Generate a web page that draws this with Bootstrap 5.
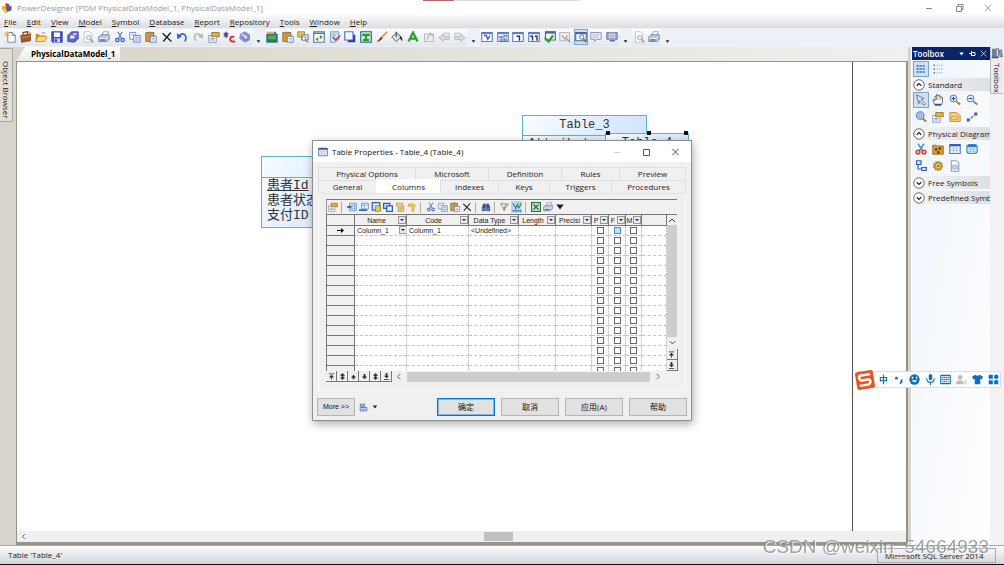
<!DOCTYPE html>
<html lang="en">
<head>
<meta charset="utf-8">
<meta name="viewport" content="width=device-width, initial-scale=1">
<title>PowerDesigner</title>
<link href="https://cdn.jsdelivr.net/npm/bootstrap@5.3.0/dist/css/bootstrap.min.css" rel="stylesheet">
<style>
body{font:8px/12px "Open Sans","Noto Sans CJK SC",sans-serif;color:#222;background:#d8d4cc}
button{font:inherit;color:inherit;border:0;background:none;padding:0}
a{color:inherit;text-decoration:none}
svg{display:block}
.ic{width:12px;height:12px}
.app-title{height:15px;background:#fff;color:#999;padding:0 12px 0 1px}
.win-btns{gap:20px;color:#888}
.app-menu{height:13px;background:linear-gradient(#fbfbfc,#dcdde0);gap:10px}
.app-menu a::first-letter{text-decoration:underline}
.tools{height:19px;background:#ecf0f7;padding-left:3px}
.tgroup{background:linear-gradient(#fbfcfe,#e3e7ee);height:17px}
.tgroup button{width:14px;height:16px;display:grid;place-items:center}
.tgroup .on,.tb-on{background:#cfe0f5;outline:1px solid #7da2ce;outline-offset:-1px}
.g16{width:249px}.g13{width:202px}.g9{width:139px}.g2{width:29px}
.grip{width:13px;height:17px;padding:10px 0 0 4px}
.sidebar{width:16px}
.vtab{writing-mode:vertical-rl;background:#e2dfd8;border:1px solid #aaa69e;border-left:0;white-space:nowrap}
.sidebar .vtab{width:13px;height:74px;padding-top:12px;margin-top:1px}
.doc-tabs{height:14px;background:linear-gradient(90deg,#d8d4cc,#f1f0ee)}
.doc-tab{background:linear-gradient(#fff,#eceae6);clip-path:polygon(9px 0,100% 0,100% 100%,0 100%);padding:0 5px 0 15px;line-height:10px;color:#000;font-weight:700}
.canvas-box{border:solid #96938c;border-width:1px 2px 3px 1px;background:#fff;overflow:hidden}
.sheet{border-right:1px solid #555;margin-right:53px}
.hscroll{height:11px;background:#f0f0f0}
.hthumb{width:29px;height:9px;background:#c1c1c1;margin-left:457px}
.entity{border:1px solid #59b4c4;background:linear-gradient(120deg,#f8fcff,#c8e0fb);font-family:"Liberation Mono","Noto Sans CJK SC",monospace;color:#333;white-space:nowrap}
.entity h2{font-size:12px;line-height:18px;height:20px;margin:0;border-bottom:1px solid #59b4c4;font-weight:400;text-align:center}
.entity p{font-size:13px;line-height:15px;margin:0;padding-left:5px}
.pk{text-decoration:underline}
.e-left{left:244px;top:94px;width:110px;height:72px}
.e-left h2{height:21px}
.e-three{left:505px;top:53px;width:125px;height:60px}
.e-four{left:588px;top:71px;width:84px;height:60px}
.dot{width:4px;height:4px;background:#111;top:-3px}
.dlg{left:295px;top:78px;width:380px;background:#f0f0f0;border:1px solid #8e8e8e;box-shadow:1px 3px 9px #0005}
.dlg-title{height:21px;background:#fff;padding:0 11px 0 5px;color:#111}
.dlg-body{padding:5px 5px 4px 5px}
.trow{height:13px}
.trow button{border:1px solid #dedede;border-bottom:0;border-right:0;line-height:12px}
.trow button:last-child{border-right:1px solid #dedede}
.trow .sel{background:#fff;border-color:#fff;margin-top:-1px;line-height:12px}
.w50{width:51px}.w58{width:58px}.w62{width:62px}.w64{width:64px}.w74{width:73px}.w97{width:97px}
.pane{border:1px solid #fafafa;border-top-color:#e2e2e2;padding:5px 8px 8px 7px}
.gtools{border-top:1px solid #777;height:15px;gap:1px;border-left:1px solid #999}
.gtools button{width:11px;height:12px;display:grid;place-items:center}
.gtools .ic{width:10px;height:10px}
.gtools .tb-on{outline:0;background:#b5d9f5}
.gsep{width:1px;height:11px;background:#aaa;margin:0 3px 0 2px}
.gridwrap{border:1px solid #777;border-right:0;border-bottom:0;height:157px}
.gridview{height:156px;overflow:hidden;background:#fff}
.gbl{table-layout:fixed;width:100%;font:7px/9px "Liberation Sans",sans-serif;border-collapse:separate;border-spacing:0;color:#222}
.gbl th{height:11px;padding:0;background:#f0f0f0;border-right:1px solid #777;border-bottom:1px solid #777;font-weight:400;overflow:hidden;white-space:nowrap}
.gbl td{height:10px;padding:0 0 0 2px;border-right:1px dashed #ccc;border-bottom:1px dashed #c4c4c4;overflow:hidden;white-space:nowrap}
.gbl td.tick{padding:0}
.gbl tbody th{height:10px}
.dd{width:8px;height:8px;border:1px solid #999;background:#e8e8ee;display:grid;place-items:center;flex:none}
.dd::after{content:"";border:2px solid transparent;border-top-color:#224;border-bottom:0}
.gbl input[type=checkbox]{appearance:none;display:block;width:7px;height:7px;margin:1px auto;border:1px solid #666;background:#fff}
.gbl input.hot{background:#bfe0fa;border-color:#4a90c8}
.cellin{width:42px;height:9px;border:0;padding:0;font:inherit;color:inherit;background:none}
.vs{width:10px;background:#f0f0f0}
.vs-thumb{background:#cdcdcd}
.navb button{width:11px;height:11px;border:solid #777;border-width:0 1px 1px 0;display:grid;place-items:center}
.navb svg{width:7px;height:7px;opacity:.8}
.dlg-foot{padding-top:7px;margin:0 -1px}
.foot-btns{gap:6px}
.dbtn{height:18px;background:#e1e1e1;border:1px solid #b4b4b4;line-height:14px;color:#111;width:58px}
.dbtn.main{border:1px solid #0078d7;outline:1px solid #7fb6e6;outline-offset:-2px}
.dbtn.more{width:38px;font-size:7px;font-family:"Liberation Sans",sans-serif}
.toolbox{width:79px;background:linear-gradient(100deg,#eef4fc,#fff);border-left:1px solid #fff;margin-left:3px}
.tbx-head{height:13px;background:#0a246a;color:#fff;padding:0 3px 0 1px;font-weight:600}
.tbx-view{height:18px}
.tbx-sec{height:13px;background:linear-gradient(90deg,#f4f5f7,#dcdfe4);white-space:nowrap;overflow:hidden;gap:3px;padding-left:1px;width:100%;text-align:left}
.tbx-sec .ic{flex:none}
.tbx-grid{display:grid;grid-template-columns:repeat(4,17px);grid-auto-rows:17px;padding:1px}
.tbx-grid button{display:grid;place-items:center;width:16px;height:16px}
.tbx-gap{margin-bottom:2px}
.rail{width:14px;background:#f2f2f4}
.rail .vtab{width:13px;height:47px;border:1px solid #bbb;border-top:0;border-right:0;background:#ececee}
.status{height:20px;background:linear-gradient(#fbfcfd,#d3d5d8);border-top:1px solid #aaa;border-bottom:1px solid #111;padding-left:8px}
.status .srv{width:119px;height:15px;border:1px solid #aaa;padding-left:7px;margin-right:8px;line-height:13px}
.ime{right:3px;top:371px;height:17px;width:144px;background:#fffe;border:1px solid #d5e0ea;border-radius:2px;color:#0b6fc0;padding:0 1px 0 21px;font-size:9px;font-weight:700}
.ime-logo{left:-4px;top:-3px;width:22px;height:22px}
.ime .ic{width:11px;height:11px}
.mark-id{right:15px;bottom:6px;font:19px/24px "Liberation Sans",sans-serif;color:#8a8a8acc;text-shadow:1px 1px 0 #fffc;pointer-events:none}
.strip{left:423px;top:0;width:157px;height:1px;background:linear-gradient(90deg,#b66 31px,#ddd 31px)}
</style>
</head>
<body class="vh-100 overflow-hidden d-flex flex-column">

<!-- icon sheet, drawn on a 16 unit grid -->
<svg width="0" height="0" class="position-absolute" aria-hidden="true">
<defs>
<symbol id="logo" viewBox="0 0 16 16"><path d="M6 1l5 2v5l-5-2z" fill="#d43a2a"/><path d="M1 6l5-2v6l-5 1z" fill="#e8b92c"/><path d="M6 7l8-2v6l-7 3z" fill="#3a63b8"/><path d="M3 11l4-1 2 4-4 1z" fill="#f0c83c"/></symbol>
<symbol id="new" viewBox="0 0 16 16"><path d="M5 2h6l4 4v9H5z" fill="#fff" stroke="#4a6a98"/><path d="M11 2v4h4" fill="none" stroke="#4a6a98"/><path d="M4 0v8M0 4h8M1 1l6 6M7 1L1 7" stroke="#e8a820"/></symbol>
<symbol id="case" viewBox="0 0 16 16"><path d="M1 6l13-2v9l-12 2z" fill="#a05a28" stroke="#6d3a15"/><path d="M4 5V2l6-1v3" fill="none" stroke="#6d3a15" stroke-width="1.5"/><path d="M2 9l12-2" stroke="#e0a060"/><path d="M11 1l4 3" stroke="#e4a93a" stroke-width="2"/></symbol>
<symbol id="open" viewBox="0 0 16 16"><path d="M1 13V4h4l1 2h7v7z" fill="#c98f1d"/><path d="M1 14l3-7h12l-3 7z" fill="#ffdc78" stroke="#b57e19"/><path d="M9 3q3-3 5 1" fill="none" stroke="#4a70b0"/></symbol>
<symbol id="save" viewBox="0 0 16 16"><path d="M1 1h14v14H2l-1-1z" fill="#4356c0" stroke="#27358c"/><path d="M4 2h8v6H4z" fill="#fff"/><path d="M4 10h8v5H4z" fill="#cfd4ec"/><path d="M5 11h3v3H5z" fill="#27358c"/></symbol>
<symbol id="saveall" viewBox="0 0 16 16"><path d="M6 1h9v9l-5 5-9-1V6z" fill="#6067c4" stroke="#383f96"/><path d="M4 6h6v4H4zM8 3h5v2H8z" fill="#dfe2f7"/></symbol>
<symbol id="preview" viewBox="0 0 16 16"><path d="M3 1h7l3 3v11H3z" fill="#fff" stroke="#b0b4ba"/><circle cx="9" cy="9" r="3" fill="#eee" stroke="#999"/><path d="M11 11l4 4" stroke="#999" stroke-width="2"/></symbol>
<symbol id="print" viewBox="0 0 16 16"><path d="M5 6l2-5h7l-2 5z" fill="#fff" stroke="#7b8ba5"/><path d="M1 8l3-3h11v6l-3 3H1z" fill="#b9c7dc" stroke="#5f7391"/><path d="M2 10h9l3-3" fill="none" stroke="#fff"/><path d="M3 12h7" stroke="#4b78bd" stroke-width="2"/></symbol>
<symbol id="cut" viewBox="0 0 16 16"><path d="M5 1l5 9M11 1L6 10" stroke="#5a7da8" stroke-width="1.5"/><circle cx="4.500" cy="12" r="2.300" fill="none" stroke="#2b58b5" stroke-width="1.600"/><circle cx="11.500" cy="12" r="2.300" fill="none" stroke="#2b58b5" stroke-width="1.600"/></symbol>
<symbol id="copy" viewBox="0 0 16 16"><path d="M1 2h8v9H1z" fill="#fff" stroke="#4a78c0"/><path d="M6 6h9v9H6z" fill="#dce9fb" stroke="#4a78c0"/><path d="M3 5h4M8 9h5M8 12h5" stroke="#6f97d3"/></symbol>
<symbol id="paste" viewBox="0 0 16 16"><path d="M1 2h11v12H1z" fill="#d99a2b" stroke="#83601f"/><path d="M4 1h5v3H4z" fill="#888"/><path d="M7 7h8v8H7z" fill="#fff" stroke="#41639c"/><path d="M9 10h4M9 12h4" stroke="#7b94bd"/></symbol>
<symbol id="del" viewBox="0 0 16 16"><path d="M2 3l12 11M13 2L3 14" stroke="#222" stroke-width="1.800"/></symbol>
<symbol id="undo" viewBox="0 0 16 16"><path d="M4 7c4-6 12-3 8 7" fill="none" stroke="#3263cc" stroke-width="2.200"/><path d="M1 3l1 8 6-4z" fill="#3263cc"/></symbol>
<symbol id="redo" viewBox="0 0 16 16"><path d="M12 7C8 1 0 4 5 13" fill="none" stroke="#b6b9be" stroke-width="2.200"/><path d="M15 3l-1 8-6-4z" fill="#b6b9be"/></symbol>
<symbol id="prop" viewBox="0 0 16 16"><path d="M1 6h10v9H1z" fill="#fff" stroke="#6780a8"/><path d="M3 10h6M3 12h6" stroke="#6780a8"/><path d="M5 2h10v6l-4-1-6 1z" fill="#e3b23c" stroke="#8a6a20"/></symbol>
<symbol id="starc" viewBox="0 0 16 16"><path d="M4 1v8M1 3l6 4M7 3L1 7" stroke="#4338c0" stroke-width="2"/><path d="M15 8c-6-3-8 7-1 6h2" fill="none" stroke="#d52a36" stroke-width="2.400"/></symbol>
<symbol id="swirl" viewBox="0 0 16 16"><path d="M8 1l6 4v7l-6 3-7-5 1-6z" fill="#8590dc" stroke="#7b84cc"/><circle cx="9" cy="8" r="3" fill="#d8dcf8" stroke="#5963b4"/><path d="M4 4l3 3" stroke="#fff" stroke-width="1.500"/></symbol>
<symbol id="model" viewBox="0 0 16 16"><path d="M1 4h14v11H1z" fill="#2c7f62" stroke="#235c8d"/><path d="M1 2h9" stroke="#e0aa33" stroke-width="2"/><path d="M3 6h10v5H3z" fill="#53b04b"/><path d="M12 1v5" stroke="#3d78c4" stroke-width="3"/></symbol>
<symbol id="find" viewBox="0 0 16 16"><path d="M1 1h9v7H1z" fill="#f0c454" stroke="#9b7625"/><path d="M6 5h9v7H6z" fill="#cfe0f6" stroke="#4c6da5"/><circle cx="9" cy="10" r="2.500" fill="#fff" stroke="#666"/><path d="M11 12l4 3" stroke="#b5762c" stroke-width="2"/></symbol>
<symbol id="refresh" viewBox="0 0 16 16"><path d="M1 1h14v14H1z" fill="#fff" stroke="#5575a4" stroke-width="1.500"/><path d="M1 3h14" stroke="#5575a4" stroke-width="2"/><path d="M9 5l4 3-4 3zM7 8l-4 3 4 3z" fill="#4aa52f"/></symbol>
<symbol id="check" viewBox="0 0 16 16"><path d="M2 1h11v10l-5 4H2z" fill="#cfe6f6" stroke="#4f8fc0"/><path d="M4 4h6M4 6h5" stroke="#8aa7d2"/><path d="M5 8l4 4 6-6" stroke="#c93943" stroke-width="2.200" fill="none"/></symbol>
<symbol id="shadow" viewBox="0 0 16 16"><path d="M5 5h10v10H5z" fill="#28398a"/><path d="M1 1h11v11H1z" fill="#f4f9ff" stroke="#4773c1" stroke-width="1.500"/></symbol>
<symbol id="textbox" viewBox="0 0 16 16"><path d="M1 1h14v14H1z" fill="#cdf3c9" stroke="#2b5b9e" stroke-width="1.500"/><path d="M3 5h10M4 12h8M8 4v8" stroke="#1f9e30" stroke-width="3"/></symbol>
<symbol id="brush" viewBox="0 0 16 16"><path d="M15 1L6 10" stroke="#e0a04a" stroke-width="2.500"/><path d="M7 8l2 2-5 4H1z" fill="#654321"/></symbol>
<symbol id="bucket" viewBox="0 0 16 16"><path d="M1 8l7-6 5 6-6 6z" fill="#ddd" stroke="#444"/><path d="M7 1v7" stroke="#444" stroke-width="1.500"/><path d="M12 6q4 2 3 8l-3-4z" fill="#333"/></symbol>
<symbol id="fontc" viewBox="0 0 16 16"><path d="M2 14L8 2l6 12M4 10h8" stroke="#27a32f" stroke-width="3" fill="none"/></symbol>
<symbol id="gbox" viewBox="0 0 16 16"><path d="M2 4h12v10H2z" fill="#eee" stroke="#bbb" stroke-width="1.500"/><path d="M5 11l5-8 3 4" stroke="#aaa" fill="none" stroke-width="1.500"/></symbol>
<symbol id="gleft" viewBox="0 0 16 16"><path d="M1 9l6-5v3h8v4H7v3z" fill="#ddd" stroke="#aaa"/><path d="M7 3h8v3" stroke="#aaa" fill="none"/></symbol>
<symbol id="gright" viewBox="0 0 16 16"><path d="M15 9L9 4v3H1v4h8v3z" fill="#ddd" stroke="#aaa"/><path d="M9 3H1v3" stroke="#aaa" fill="none"/></symbol>
<symbol id="dg1" viewBox="0 0 16 16"><path d="M1 2h14v12H1z" fill="#fff" stroke="#5a80c0" stroke-width="1.500"/><path d="M1 3h14" stroke="#5a80c0" stroke-width="2.500"/><path d="M4 6h3l2 5 3-5" stroke="#3658b8" fill="none" stroke-width="1.800"/></symbol>
<symbol id="dg2" viewBox="0 0 16 16"><path d="M1 2h14v12H1z" fill="#fff" stroke="#5a80c0" stroke-width="1.500"/><path d="M1 3h14" stroke="#5a80c0" stroke-width="2.500"/><path d="M3 7h4v2H3zM9 6h4v2H9zM4 11h3v2H4zM9 11h4v2H9zM6 8l5 3" stroke="#3658b8" fill="none"/></symbol>
<symbol id="dg3" viewBox="0 0 16 16"><path d="M1 2h14v12H1z" fill="#fff" stroke="#5a80c0" stroke-width="1.500"/><path d="M1 3h14" stroke="#5a80c0" stroke-width="2.500"/><path d="M6 7h4v6" stroke="#222c66" fill="none" stroke-width="1.800"/></symbol>
<symbol id="dg4" viewBox="0 0 16 16"><path d="M1 2h14v12H1z" fill="#fff" stroke="#5a80c0" stroke-width="1.500"/><path d="M1 3h14" stroke="#5a80c0" stroke-width="2.500"/><path d="M3 7h3v6M9 7h3v6" stroke="#222c66" fill="none" stroke-width="1.800"/></symbol>
<symbol id="dg5" viewBox="0 0 16 16"><path d="M2 1h13v11H2z" fill="#fff" stroke="#4068ad" stroke-width="1.500"/><path d="M2 2h13" stroke="#4068ad" stroke-width="3"/><path d="M1 9l5 5 6-8" stroke="#35982e" fill="none" stroke-width="3"/></symbol>
<symbol id="dg6" viewBox="0 0 16 16"><path d="M1 2h13v11H1z" fill="#eee" stroke="#bbb" stroke-width="1.500"/><path d="M4 6l4 5 3-5M10 10l5 5" stroke="#999" fill="none" stroke-width="1.500"/></symbol>
<symbol id="dg7" viewBox="0 0 16 16"><path d="M1 2h14v11H1z" fill="#fff" stroke="#4068ad" stroke-width="1.500"/><path d="M1 3h14" stroke="#4068ad" stroke-width="2.500"/><circle cx="9" cy="8" r="3" fill="#e4ecf6" stroke="#555"/><path d="M11 10l4 5" stroke="#8c6a3a" stroke-width="2"/></symbol>
<symbol id="note" viewBox="0 0 16 16"><path d="M1 2h14v9H9l-3 3v-3H1z" fill="#eef0f5" stroke="#8a96b0" stroke-width="1.300"/><path d="M3 5h10M3 8h8" stroke="#9aa4b8"/></symbol>
<symbol id="keyb" viewBox="0 0 16 16"><path d="M1 2h14v9H1z" fill="#8a94c4" stroke="#666f94"/><path d="M2 5h12M2 8h12M5 2v9M8 2v9M11 2v9" stroke="#e0e4f4"/><path d="M5 13h7" stroke="#666f94" stroke-width="2"/></symbol>
<symbol id="table" viewBox="0 0 16 16"><path d="M1 2h14v12H1z" fill="#fff" stroke="#5a76b8" stroke-width="1.500"/><path d="M1 3h14" stroke="#3459a8" stroke-width="3"/><path d="M1 7h14M1 10h14M6 4v10M10 4v10" stroke="#9db4dd"/></symbol>
<symbol id="ins" viewBox="0 0 16 16"><path d="M4 2h11v12H4z" fill="#e7f2ff" stroke="#3a78bd"/><path d="M4 6h11M4 10h11M8 2v12M12 2v12" stroke="#5b97d4"/><path d="M0 8h7" stroke="#1b57a8" stroke-width="2.500"/></symbol>
<symbol id="addr" viewBox="0 0 16 16"><path d="M4 2h11v9H4z" fill="#e7f2ff" stroke="#3a78bd"/><path d="M4 5h11M8 2v9" stroke="#5b97d4"/><path d="M0 13h13" stroke="#1b57a8" stroke-width="2.500"/></symbol>
<symbol id="addc" viewBox="0 0 16 16"><path d="M2 1h12v12H2z" fill="#dcebfc" stroke="#2f5da9" stroke-width="2"/><path d="M7 6h8v9H7z" fill="#f0c63d" stroke="#6b6a30"/></symbol>
<symbol id="repl" viewBox="0 0 16 16"><path d="M1 2h10v8H1z" fill="#c7dcf8" stroke="#2f5da9" stroke-width="2"/><path d="M6 6h9v9H6z" fill="#e4efff" stroke="#2f5da9" stroke-width="2"/></symbol>
<symbol id="scroll" viewBox="0 0 16 16"><path d="M2 2h10v4h2v9H5V6H2z" fill="#ead28c" stroke="#a88438"/><path d="M7 8h5M7 11h5" stroke="#a88438"/></symbol>
<symbol id="rept" viewBox="0 0 16 16"><path d="M2 2h8v4H2zM2 8h12v6H2z" fill="#d5e0f4" stroke="#4a68ac" stroke-width="1.400"/><path d="M4 4h4M4 11h8" stroke="#4a68ac"/></symbol>
<symbol id="key" viewBox="0 0 16 16"><path d="M2 3h9l3 3-3 2v7H8V7H2z" fill="#f0c84c" stroke="#c8a048"/></symbol>
<symbol id="bino" viewBox="0 0 16 16"><path d="M2 14V8l2-5h3v11zM9 14V3h3l2 5v6zM6 7h4" fill="#35548f" stroke="#35548f"/><path d="M3 11h3M10 11h3" stroke="#cbd9f2"/></symbol>
<symbol id="filt" viewBox="0 0 16 16"><path d="M1 3h10l-4 5v6l-2-3V8z" fill="#fff" stroke="#444"/><path d="M14 2L7 12" stroke="#d09c3b" stroke-width="2"/></symbol>
<symbol id="cust" viewBox="0 0 16 16"><path d="M1 2l5 7v3M10 2L6 9" stroke="#36425e" stroke-width="1.500" fill="none"/><path d="M8 6l3 3 4-7" stroke="#279b3a" stroke-width="2" fill="none"/><path d="M1 14h14" stroke="#36425e" stroke-width="2" stroke-dasharray="2 1"/></symbol>
<symbol id="xls" viewBox="0 0 16 16"><path d="M1 1h14v14H1z" fill="#e5f5e3" stroke="#287738" stroke-width="2"/><path d="M4 4l8 8M12 4l-8 8" stroke="#287738" stroke-width="2.500"/></symbol>
<symbol id="grid" viewBox="0 0 16 16"><path d="M2 3h3v2H2zM6 3h3v2H6zM10 3h3v2h-3zM2 7h3v2H2zM6 7h3v2H6zM10 7h3v2h-3zM2 11h3v2H2zM6 11h3v2H6zM10 11h3v2h-3z" fill="#3c71c0"/></symbol>
<symbol id="list" viewBox="0 0 16 16"><path d="M2 3h2M2 8h2M2 13h2" stroke="#3c71c0" stroke-width="2"/><path d="M6 3h8M6 8h8M6 13h8" stroke="#999" stroke-dasharray="2 1"/></symbol>
<symbol id="up" viewBox="0 0 16 16"><circle cx="8" cy="8" r="7" fill="#fff" stroke="#444"/><path d="M5 9l3-3 3 3" fill="none" stroke="#222" stroke-width="1.600"/></symbol>
<symbol id="down" viewBox="0 0 16 16"><circle cx="8" cy="8" r="7" fill="#fff" stroke="#444"/><path d="M5 7l3 3 3-3" fill="none" stroke="#222" stroke-width="1.600"/></symbol>
<symbol id="arrow" viewBox="0 0 16 16"><path d="M2 1l10 5-4 1 6 6-2 2-6-6-1 4z" fill="#dce6f4" stroke="#4c5c7a"/></symbol>
<symbol id="hand" viewBox="0 0 16 16"><path d="M4 15L1 8l2-1 1 2V3h2V1h2v1h2v1h2v2h2v6l-2 4z" fill="#fff" stroke="#444"/><path d="M6 3v5M8 2v6M11 3v5" stroke="#777"/><path d="M4 14h8" stroke="#2b4fae" stroke-width="2"/></symbol>
<symbol id="zin" viewBox="0 0 16 16"><circle cx="6" cy="6" r="4.500" fill="#e2f0ff" stroke="#5779b0" stroke-width="1.300"/><path d="M6 3.500v5M3.500 6h5" stroke="#234c9c" stroke-width="1.500"/><path d="M10 10l5 4" stroke="#b5762c" stroke-width="2.500"/></symbol>
<symbol id="zfit" viewBox="0 0 16 16"><circle cx="7" cy="6" r="5" fill="#bcd8f6" stroke="#5779b0" stroke-width="1.500"/><circle cx="7" cy="6" r="2" fill="#fff" stroke="#3c62a8"/><path d="M10 10l5 4" stroke="#b5762c" stroke-width="2.500"/></symbol>
<symbol id="zout" viewBox="0 0 16 16"><circle cx="6" cy="6" r="4.500" fill="#e2f0ff" stroke="#5779b0" stroke-width="1.300"/><path d="M3.500 6h5" stroke="#234c9c" stroke-width="1.500"/><path d="M10 10l5 4" stroke="#b5762c" stroke-width="2.500"/></symbol>
<symbol id="pkg" viewBox="0 0 16 16"><path d="M1 2h9l5 4v8H1z" fill="#f4cf6a" stroke="#b48a2c"/><path d="M3 8h9v3H3z" fill="#fff3c9" stroke="#b48a2c"/></symbol>
<symbol id="link" viewBox="0 0 16 16"><path d="M3 12l5-3 4-5" stroke="#6e8fcf" fill="none"/><path d="M1 10h4v4H1zM11 2h4v4h-4zM7 7h2v2H7z" fill="#3c5fb4"/></symbol>
<symbol id="rcut" viewBox="0 0 16 16"><path d="M4 1l6 9M12 1L6 10" stroke="#4b93c8" stroke-width="2"/><circle cx="4" cy="12" r="2.500" fill="none" stroke="#da3a28" stroke-width="2"/><circle cx="12" cy="12" r="2.500" fill="none" stroke="#da3a28" stroke-width="2"/></symbol>
<symbol id="pack" viewBox="0 0 16 16"><path d="M1 3h5l1 1h8v11H1z" fill="#dc9f2c" stroke="#7b5717"/><path d="M4 7h3v3H4zM9 6h3v3H9zM7 11h3v3H7z" fill="#51350e"/></symbol>
<symbol id="view" viewBox="0 0 16 16"><rect x="1" y="2" width="14" height="12" rx="4" fill="#dff2fa" stroke="#3a86c8" stroke-width="1.500"/><path d="M2 4h12" stroke="#2a6cc0" stroke-width="3"/><path d="M1 8h14M1 11h14M6 4v10M10 4v10" stroke="#7cc2d8"/></symbol>
<symbol id="ref" viewBox="0 0 16 16"><path d="M2 1h6v5H2zM9 10h6v4H9z" fill="#d7e5fb" stroke="#2d5fc4" stroke-width="1.600"/><path d="M4 6v6h5" fill="none" stroke="#2d5fc4" stroke-width="1.600"/></symbol>
<symbol id="gear" viewBox="0 0 16 16"><circle cx="8" cy="8" r="4.500" fill="#f1cf7a" stroke="#c5953a" stroke-width="3"/><circle cx="8" cy="8" r="6" fill="none" stroke="#b5802a" stroke-width="1.500" stroke-dasharray="2 2"/><circle cx="8" cy="8" r="1.500" fill="#8c5e19"/></symbol>
<symbol id="file" viewBox="0 0 16 16"><path d="M3 1h7l3 3v11H3z" fill="#fff" stroke="#5c7398"/><path d="M5 7h6v5H5z" fill="#c6d8f2" stroke="#8aa0c6"/></symbol>
<symbol id="books" viewBox="0 0 16 16"><path d="M2 3h4v10H2z" fill="#4f8ac4" stroke="#667"/><path d="M7 2h3v11H7z" fill="#cdd9e6" stroke="#667"/><path d="M11 4h3l1 9h-3z" fill="#8fa2b8" stroke="#667"/><path d="M1 14h9" stroke="#555" stroke-width="2"/></symbol>
<symbol id="tri" viewBox="0 0 8 8"><path d="M1 2h6L4 6z" fill="currentColor"/></symbol>
<symbol id="x" viewBox="0 0 10 10"><path d="M1 1l8 8M9 1L1 9" stroke="currentColor" fill="none"/></symbol>
<symbol id="chl" viewBox="0 0 8 8"><path d="M5 1L2 4l3 3" stroke="#333" fill="none"/></symbol>
<symbol id="chr" viewBox="0 0 8 8"><path d="M3 1l3 3-3 3" stroke="#333" fill="none"/></symbol>
<symbol id="chu" viewBox="0 0 8 8"><path d="M1 6l3-3 3 3" stroke="#333" fill="none"/></symbol>
<symbol id="chd" viewBox="0 0 8 8"><path d="M1 2l3 3 3-3" stroke="#333" fill="none"/></symbol>
<symbol id="n0" viewBox="0 0 8 8"><path d="M1 1h6M4 3v5" stroke="#222"/><path d="M1 5l3-3 3 3z"/></symbol>
<symbol id="n1" viewBox="0 0 8 8"><path d="M1 3l3-3 3 3zM1 5h6L4 8zM3 3h2v2H3z"/></symbol>
<symbol id="n2" viewBox="0 0 8 8"><path d="M1 5l3-3 3 3zM3 5h2v2H3z"/></symbol>
<symbol id="n3" viewBox="0 0 8 8"><path d="M1 4h6L4 7zM3 1h2v3H3z"/></symbol>
<symbol id="n5" viewBox="0 0 8 8"><path d="M1 3h6L4 6zM3 0h2v3H3zM1 7h6v1H1z"/></symbol>
</defs>
</svg>

<header>
  <div class="app-title d-flex align-items-center justify-content-between">
    <div class="d-flex align-items-center gap-1"><svg class="ic"><use href="#logo"/></svg><span>PowerDesigner [PDM PhysicalDataModel_1, PhysicalDataModel_1]</span></div>
    <div class="win-btns d-flex align-items-center">
      <button aria-label="Minimize"><svg width="10" height="8"><path d="M2 4.500h6" stroke="currentColor"/></svg></button>
      <button aria-label="Restore"><svg width="10" height="8"><path d="M2.500 2.500h5v5h-5zM4 2.500v-2h5v5H8" fill="none" stroke="currentColor"/></svg></button>
      <button aria-label="Close"><svg width="8" height="8"><use href="#x"/></svg></button>
    </div>
  </div>
  <nav class="app-menu d-flex align-items-center ps-1">
    <a href="#" class="d-block">File</a><a href="#" class="d-block">Edit</a><a href="#" class="d-block">View</a><a href="#" class="d-block">Model</a><a href="#" class="d-block">Symbol</a><a href="#" class="d-block">Database</a><a href="#" class="d-block">Report</a><a href="#" class="d-block">Repository</a><a href="#" class="d-block">Tools</a><a href="#" class="d-block">Window</a><a href="#" class="d-block">Help</a>
  </nav>
  <div class="tools d-flex align-items-center">
    <div class="tgroup g16 d-flex justify-content-between" data-icons="new case open save saveall preview print cut copy paste del undo redo prop starc swirl"></div>
    <div class="grip"><svg width="5" height="5"><use href="#tri"/></svg></div>
    <div class="tgroup g13 d-flex justify-content-between" data-icons="model paste find refresh check shadow textbox brush bucket fontc gbox gleft gright"></div>
    <div class="grip"><svg width="5" height="5"><use href="#tri"/></svg></div>
    <div class="tgroup g9 d-flex justify-content-between" data-icons="dg1 dg2 dg3 dg4 dg5 dg6 dg7! note keyb"></div>
    <div class="grip"><svg width="5" height="5"><use href="#tri"/></svg></div>
    <div class="tgroup g2 d-flex justify-content-between" data-icons="preview print"></div>
    <div class="grip"><svg width="5" height="5"><use href="#tri"/></svg></div>
  </div>
</header>

<main class="flex-grow-1 d-flex" style="min-height:0">
  <aside class="sidebar flex-shrink-0"><div class="vtab">Object Browser</div></aside>
  <section class="flex-grow-1 d-flex flex-column" style="min-width:0">
    <div class="doc-tabs d-flex"><button class="doc-tab">PhysicalDataModel_1</button></div>
    <div class="canvas-box flex-grow-1 d-flex flex-column position-relative">
      <div class="sheet flex-grow-1"></div>
      <div class="hscroll d-flex align-items-center ps-1"><svg width="6" height="7"><use href="#chl"/></svg><div class="hthumb"></div></div>

      <div class="entity e-left position-absolute"><h2>&nbsp;</h2><p class="pk">患者Id</p><p>患者状态</p><p>支付ID</p></div>
      <div class="entity e-three position-absolute"><h2>Table_3</h2><p>Attribute_1</p></div>
      <div class="entity e-four position-absolute"><i class="dot position-absolute start-0"></i><i class="dot position-absolute start-50"></i><i class="dot position-absolute end-0"></i><h2>Table_4</h2></div>

      <div class="dlg position-absolute" role="dialog" aria-label="Table Properties">
        <div class="dlg-title d-flex align-items-center justify-content-between">
          <div class="d-flex align-items-center gap-1"><svg width="10" height="10"><use href="#table"/></svg><span>Table Properties - Table_4 (Table_4)</span></div>
          <div class="win-btns d-flex align-items-center text-dark">
            <button aria-label="Minimize"><svg width="10" height="8"><path d="M2 4.500h6" stroke="#ccc"/></svg></button>
            <button aria-label="Maximize"><svg width="9" height="8"><path d="M1.500 1.500h6v6h-6z" fill="none" stroke="#555"/></svg></button>
            <button aria-label="Close"><svg width="9" height="8"><use href="#x"/></svg></button>
          </div>
        </div>
        <div class="dlg-body">
          <div class="trow d-flex"><button class="w97">Physical Options</button><button class="w74">Microsoft</button><button class="w74">Definition</button><button class="w58">Rules</button><button class="flex-grow-1">Preview</button></div>
          <div class="trow d-flex"><button class="w58">General</button><button class="w64 sel">Columns</button><button class="w58">Indexes</button><button class="w50">Keys</button><button class="w62">Triggers</button><button class="flex-grow-1">Procedures</button></div>
          <div class="pane">
            <div class="gtools d-flex align-items-center" data-icons="prop | ins addr addc repl scroll key | cut copy paste del | bino | filt cust! | xls print tri"></div>
            <div class="gridwrap d-flex">
              <div class="flex-grow-1 gridview">
                <table class="gbl">
                  <colgroup><col style="width:28px"><col style="width:52px"><col style="width:62px"><col style="width:50px"><col style="width:37px"><col style="width:36px"><col style="width:17px"><col style="width:17px"><col style="width:16px"><col></colgroup>
                  <thead><tr><th></th>
                    <th data-h>Name</th><th data-h>Code</th><th data-h>Data Type</th><th data-h>Length</th><th data-h>Precisi</th><th data-h>P</th><th data-h>F</th><th data-h>M</th><th></th></tr></thead>
                  <tbody id="rows"></tbody>
                </table>
              </div>
              <div class="vs d-flex flex-column align-items-center"><svg width="8" height="10"><use href="#chu"/></svg><div class="vs-thumb flex-grow-1 w-100"></div><svg width="7" height="12"><use href="#chd"/></svg>
                <div class="navb"><button aria-label="First"><svg><use href="#n0"/></svg></button><button aria-label="Last"><svg><use href="#n5"/></svg></button></div></div>
            </div>
            <div class="navb d-flex align-items-center">
              <button aria-label="Top"><svg><use href="#n0"/></svg></button><button aria-label="Page up"><svg><use href="#n1"/></svg></button><button aria-label="Up"><svg><use href="#n2"/></svg></button><button aria-label="Down"><svg><use href="#n3"/></svg></button><button aria-label="Page down"><svg><use href="#n1"/></svg></button><button aria-label="Bottom"><svg><use href="#n5"/></svg></button>
              <svg class="mx-1 flex-shrink-0"><use href="#chl"/></svg><div class="vs-thumb flex-grow-1" style="height:10px"></div><svg class="mx-1 flex-shrink-0 me-3"><use href="#chr"/></svg>
            </div>
          </div>
          <div class="dlg-foot d-flex align-items-center justify-content-between">
            <div class="d-flex align-items-center gap-1"><button class="dbtn more">More &gt;&gt;</button><button class="d-flex align-items-center gap-1" aria-label="Report"><svg width="9" height="9"><use href="#rept"/></svg><svg width="6" height="6"><use href="#tri"/></svg></button></div>
            <div class="d-flex foot-btns"><button class="dbtn main">确定</button><button class="dbtn">取消</button><button class="dbtn">应用(A)</button><button class="dbtn">帮助</button></div>
          </div>
        </div>
      </div>
    </div>
  </section>

  <aside class="toolbox flex-shrink-0">
    <div class="tbx-head d-flex align-items-center justify-content-between"><span>Toolbox</span><span class="d-flex gap-1 align-items-center"><svg width="7" height="6"><use href="#tri"/></svg><svg width="7" height="7"><path d="M0 3.500h2M2.500 1v5M3 2.500h3v3H3" stroke="#fff" fill="none"/></svg><svg width="7" height="7"><use href="#x"/></svg></span></div>
    <div class="tbx-view tbx-grid" data-icons="grid! list"></div>
    <button class="tbx-sec d-flex align-items-center"><svg class="ic"><use href="#up"/></svg>Standard</button>
    <div class="tbx-grid" data-icons="arrow! hand zin zout zfit prop pkg link"></div>
    <button class="tbx-sec d-flex align-items-center"><svg class="ic"><use href="#up"/></svg>Physical Diagram</button>
    <div class="tbx-grid" data-icons="rcut pack table view ref gear file"></div>
    <button class="tbx-sec tbx-gap d-flex align-items-center"><svg class="ic"><use href="#down"/></svg>Free Symbols</button>
    <button class="tbx-sec d-flex align-items-center"><svg class="ic"><use href="#down"/></svg>Predefined Symbols</button>
  </aside>
  <aside class="rail flex-shrink-0 ms-auto"><div class="vtab d-flex align-items-center gap-1"><svg class="ic flex-shrink-0"><use href="#books"/></svg>Toolbox</div></aside>
</main>

<footer class="status d-flex align-items-center justify-content-between flex-shrink-0"><span>Table 'Table_4'</span><span class="srv">Microsoft SQL Server 2014</span></footer>

<div class="strip position-fixed"></div>
<div class="ime position-fixed d-flex align-items-center justify-content-between">
  <svg class="ime-logo position-absolute" viewBox="0 0 22 22"><g transform="rotate(-9 11 11)"><rect x="2" y="2" width="18" height="18" rx="2" fill="#ea5420"/><path d="M17 6H8q-3 0-2.500 2.500T8 11h6q2.500 0 2 2.500T13 16H5" fill="none" stroke="#fff" stroke-width="2.500"/></g></svg>
  <span>中</span>
  <svg class="ic" viewBox="0 0 16 16"><circle cx="5" cy="6" r="2" fill="#0b6fc0"/><path d="M12 8q2 3-2 6" stroke="#0b6fc0" stroke-width="2.500" fill="none"/></svg>
  <svg class="ic" viewBox="0 0 16 16"><circle cx="8" cy="8" r="7.500" fill="#0b6fc0"/><path d="M4 9q4 6 8 0z" fill="#fff"/><path d="M5 4v3M11 4v3" stroke="#fff" stroke-width="2"/></svg>
  <svg class="ic" viewBox="0 0 16 16"><rect x="5.500" y="0" width="5" height="9" rx="2.500" fill="#0b6fc0"/><path d="M2.500 6q0 6 5.500 6t5.500-6M8 12v4" stroke="#0b6fc0" stroke-width="1.600" fill="none"/></svg>
  <svg class="ic" viewBox="0 0 16 16"><rect x="1" y="2" width="14" height="12" rx="1" fill="#cfe3f5" stroke="#0b6fc0" stroke-width="1.500"/><path d="M3 5h10M3 8h10M5 11h6" stroke="#0b6fc0" stroke-width="1.500" stroke-dasharray="2 1"/></svg>
  <svg class="ic" viewBox="0 0 16 16"><circle cx="6" cy="5" r="3.500" fill="#bbb"/><path d="M0 15q0-6 6-6 4 0 5 6z" fill="#bbb"/><path d="M10 9h6v6h-6z" fill="#ddd"/></svg>
  <svg class="ic" viewBox="0 0 16 16"><path d="M5 1q3 3 6 0l5 3-2 4-2-1v8H4V7L2 8 0 4z" fill="#0b6fc0"/></svg>
  <svg class="ic" viewBox="0 0 16 16"><path d="M1 1h6v6H1zM1 9h6v6H1zM9 9h6v6H9z" fill="#0b6fc0"/><circle cx="12" cy="4" r="3.300" fill="#0b6fc0"/></svg>
</div>
<div class="mark-id position-fixed">CSDN @weixin_54664933</div>

<script>
// fill each tool strip from its list of icon ids; "!" is the pressed one, "|" a separator
document.querySelectorAll('[data-icons]').forEach(bar => {
  bar.innerHTML = bar.dataset.icons.split(' ').map(n => {
    if (n === '|') return '<i class="gsep"></i>';
    const on = n.endsWith('!'), id = n.replace('!', '');
    return `<button aria-label="${id}" class="${on ? 'on tb-on' : ''}"><svg class="ic"><use href="#${id}"/></svg></button>`;
  }).join('');
});
document.querySelectorAll('[data-h]').forEach(th => {
  th.innerHTML = `<div class="d-flex align-items-center"><span class="flex-grow-1 text-center">${th.textContent}</span><span class="dd"></span></div>`;
});
// column rows: the first holds data, the others are empty
const rows = document.getElementById('rows');
for (let r = 0; r < 15; r++) {
  const box = (c) => `<td class="tick"><input type="checkbox" aria-label="${c} ${r + 1}" class="${r === 0 && c === 'F' ? 'hot' : ''}"></td>`;
  const first = r === 0;
  rows.insertAdjacentHTML('beforeend', `<tr><th class="text-center">${first ? '<svg width="7" height="5" class="mx-auto"><path d="M0 2h4V0l3 2.500L4 5V3H0z"/></svg>' : ''}</th>` +
    (first ? '<td><div class="d-flex"><input class="cellin" aria-label="Name" value="Column_1"><span class="dd"></span></div></td><td>Column_1</td><td>&lt;Undefined&gt;</td>' : '<td></td><td></td><td></td>') +
    `<td></td><td></td>${box('P')}${box('F')}${box('M')}<td></td></tr>`);
}
</script>
<script src="https://cdn.jsdelivr.net/npm/bootstrap@5.3.0/dist/js/bootstrap.bundle.min.js"></script>
</body>
</html>
